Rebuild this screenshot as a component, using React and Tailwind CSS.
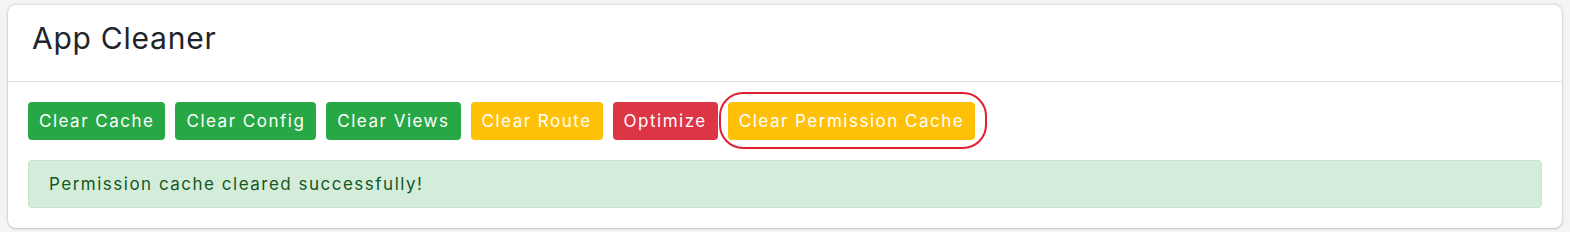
import React from "react";

function Btn({ color, children }) {
  const cls = {
    green: "bg-[#28a745]",
    yellow: "bg-[#ffc107]",
    red: "bg-[#dc3545]",
  }[color];
  return (
    <button
      className={`${cls} text-white text-[17px] leading-[24px] px-[10px] py-[6px] rounded-[4px] tracking-[1.5px] border border-transparent`}
    >
      {children}
    </button>
  );
}

export default function App() {
  return (
    <div className="min-h-[232px] bg-[#f4f4f4] pt-[5px] px-2 pb-[3px] font-['Inter','Noto_Sans',sans-serif]">
      <div className="bg-white rounded-[8px] shadow-[0_0_3px_rgba(0,0,0,0.22),0_1px_2px_rgba(0,0,0,0.12)]">
        <div className="h-[77px] px-6 pt-[15px] border-b border-[#dedede]">
          <h1 className="text-[30px] leading-[36px] text-[#212529] tracking-[0.75px]">App Cleaner</h1>
        </div>
        <div className="p-5">
          <div className="flex gap-[10px] items-center">
            <Btn color="green">Clear Cache</Btn>
            <Btn color="green">Clear Config</Btn>
            <Btn color="green">Clear Views</Btn>
            <Btn color="yellow">Clear Route</Btn>
            <Btn color="red">Optimize</Btn>
            <div className="relative">
              <Btn color="yellow">Clear Permission Cache</Btn>
              <div className="absolute -left-[9px] -right-[12px] -top-[10px] -bottom-[9px] border-2 border-[#e0202e] rounded-[24px] pointer-events-none"></div>
            </div>
          </div>
          <div className="mt-5 bg-[#d4edda] border border-[#c3e6cb] rounded-[4px] text-[#155724] text-[17px] leading-[24px] px-5 py-[11px] tracking-[1.5px]">
            Permission cache cleared successfully!
          </div>
        </div>
      </div>
    </div>
  );
}
